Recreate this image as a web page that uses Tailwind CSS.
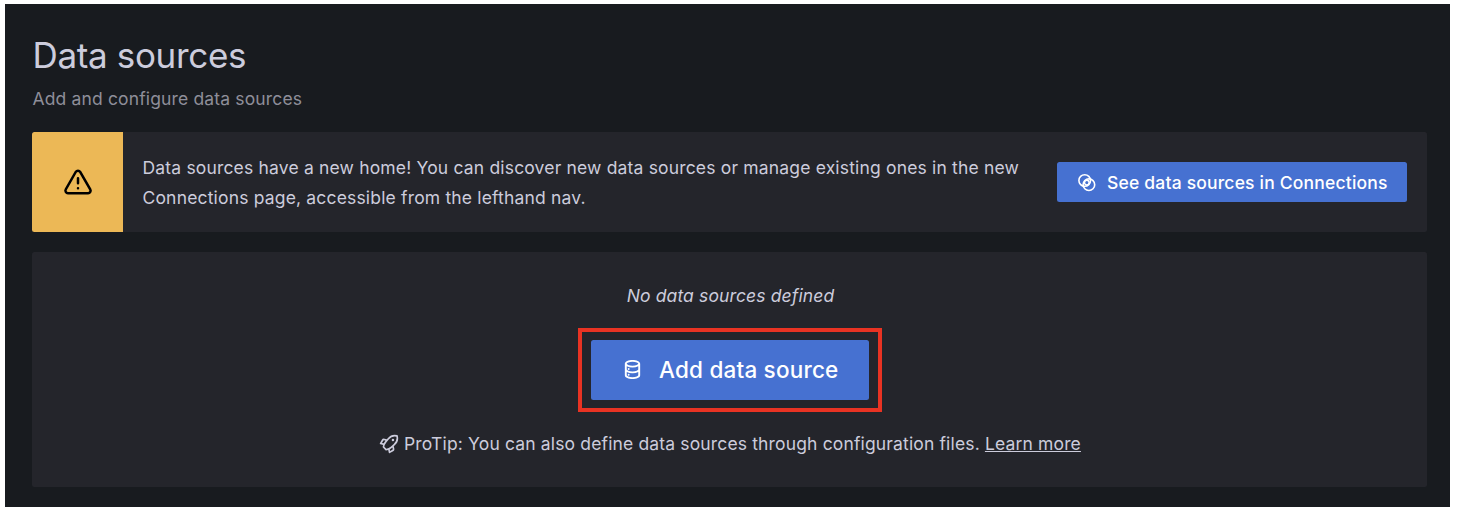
<!DOCTYPE html>
<html lang="en">
<head>
<meta charset="utf-8">
<title>Data sources</title>
<script src="https://cdn.jsdelivr.net/npm/@tailwindcss/browser@4"></script>
</head>
<body class="bg-white font-['Inter',sans-serif] text-[17.5px] leading-[27.5px] tracking-[0.17px] text-[#ccccdc]">
<div class="w-[1464px] h-[514px] pt-1 pl-[5px] overflow-hidden">
  <main class="w-[1445px] h-[503px] bg-[#181b1f] px-[27px] pt-[30px]">
    <h1 class="pl-[0.5px] text-[35px] leading-[43px] tracking-[-0.34px] font-[430]">Data sources</h1>
    <p class="mt-[8px] pl-[0.5px] text-[#8e8e99] tracking-[0.15px] font-[430]">Add and configure data sources</p>
    <section class="mt-[19.5px] w-[1395px] h-[100px] bg-[#24252b] rounded-[2.5px] overflow-hidden flex items-center pr-5">
      <div class="w-[90.5px] h-full bg-[#ecb856] flex items-center justify-center text-black shrink-0">
        <svg class="w-[30px] h-[30px] ml-px" viewBox="0 0 24 24" fill="currentColor"><path d="M12,16a1,1,0,1,0,1,1A1,1,0,0,0,12,16Zm10.67,1.47-8.05-14a3,3,0,0,0-5.24,0l-8,14A3,3,0,0,0,3.94,22H20.06a3,3,0,0,0,2.61-4.53Zm-1.73,2a1,1,0,0,1-.88.51H3.94a1,1,0,0,1-.88-.51,1,1,0,0,1,0-1l8-14a1,1,0,0,1,1.78,0l8.05,14A1,1,0,0,1,20.94,19.49ZM12,8a1,1,0,0,0-1,1v4a1,1,0,0,0,2,0V9A1,1,0,0,0,12,8Z"/></svg>
      </div>
      <p class="ml-5 pt-px flex-1 leading-[30px] whitespace-nowrap font-[430] tracking-[0.172px]">Data sources have a new home! You can discover new data sources or manage existing ones in the new<br>Connections page, accessible from the lefthand nav.</p>
      <button class="w-[350px] h-10 shrink-0 bg-[#4671d1] rounded-[2.5px] text-white font-medium flex items-center pl-5 pt-px whitespace-nowrap tracking-[0.19px]">
        <svg class="w-5 h-5 mr-[10px] shrink-0" viewBox="0 0 20 20" fill="none" stroke="currentColor" stroke-width="1.6"><circle cx="7.7" cy="7.5" r="5.8"/><circle cx="11.9" cy="11.7" r="5.8"/><circle cx="9.8" cy="9.6" r="2.3" stroke-width="1.4"/></svg>
        See data sources in Connections
      </button>
    </section>
    <section class="mt-5 w-[1395px] h-[235px] bg-[#24252b] rounded-[2.5px] flex flex-col items-center pt-[30px]">
      <p class="italic pl-[2px] tracking-[0.13px] font-[430]">No data sources defined</p>
      <div class="mt-[18.5px] ml-px w-[304px] h-[84px] border-4 border-[#e93323] flex items-center justify-center">
        <button class="w-[278px] h-[60px] bg-[#4671d1] rounded-[2.5px] text-white font-medium text-[22.5px] tracking-[0.2px] flex items-center pl-[30px] whitespace-nowrap">
          <svg class="w-[23px] h-[23px] mr-[15px] mb-px shrink-0" viewBox="0 0 24 24" fill="currentColor"><path d="M8,16.5a1,1,0,1,0,1,1A1,1,0,0,0,8,16.5ZM12,2C8,2,4,3.37,4,6V18c0,2.63,4,4,8,4s8-1.37,8-4V6C20,3.37,16,2,12,2Zm6,16c0,.71-2.28,2-6,2s-6-1.29-6-2V14.73A13.16,13.16,0,0,0,12,16a13.16,13.16,0,0,0,6-1.27Zm0-6c0,.71-2.28,2-6,2s-6-1.29-6-2V8.73A13.16,13.16,0,0,0,12,10a13.16,13.16,0,0,0,6-1.27ZM12,8C8.28,8,6,6.71,6,6s2.28-2,6-2,6,1.29,6,2S15.72,8,12,8ZM8,10.5a1,1,0,1,0,1,1A1,1,0,0,0,8,10.5Z"/></svg>
          Add data source
        </button>
      </div>
      <p class="mt-[18px] pl-px flex items-center whitespace-pre tracking-[0.15px] font-[430]"><svg class="w-5 h-5 mr-[5px]" viewBox="0 0 24 24" fill="currentColor"><path d="M22.601 2.062a1 1 0 0 0-.713-.713A11.252 11.252 0 0 0 10.47 4.972L9.354 6.296 6.75 5.668a2.777 2.777 0 0 0-3.387 1.357l-2.2 3.9a1 1 0 0 0 .661 1.469l3.073.659a13.42 13.42 0 0 0-.555 2.434 1 1 0 0 0 .284.836l3.1 3.1a1 1 0 0 0 .708.293c.028 0 .057-.001.086-.004a12.169 12.169 0 0 0 2.492-.49l.644 3.004a1 1 0 0 0 1.469.661l3.905-2.202a3.035 3.035 0 0 0 1.375-3.304l-.668-2.76 1.237-1.137A11.204 11.204 0 0 0 22.6 2.062ZM3.572 10.723l1.556-2.76a.826.826 0 0 1 1.07-.375l1.718.416-.65.772a13.095 13.095 0 0 0-1.59 2.398Zm12.47 8.222-2.715 1.532-.43-2.005a11.34 11.34 0 0 0 2.414-1.62l.743-.683.404 1.664a1.041 1.041 0 0 1-.416 1.112Zm1.615-6.965-3.685 3.386a9.773 9.773 0 0 1-5.17 2.304l-2.405-2.404a10.932 10.932 0 0 1 2.401-5.206l1.679-1.993a.964.964 0 0 0 .078-.092L11.99 6.27a9.278 9.278 0 0 1 8.81-3.12 9.218 9.218 0 0 1-3.143 8.829Zm-.923-6.164a1.5 1.5 0 1 0 1.5 1.5 1.5 1.5 0 0 0-1.5-1.5Z"/></svg><span>ProTip: You can also define data sources through configuration files. </span><a class="underline">Learn more</a></p>
    </section>
  </main>
</div>
</body>
</html>
